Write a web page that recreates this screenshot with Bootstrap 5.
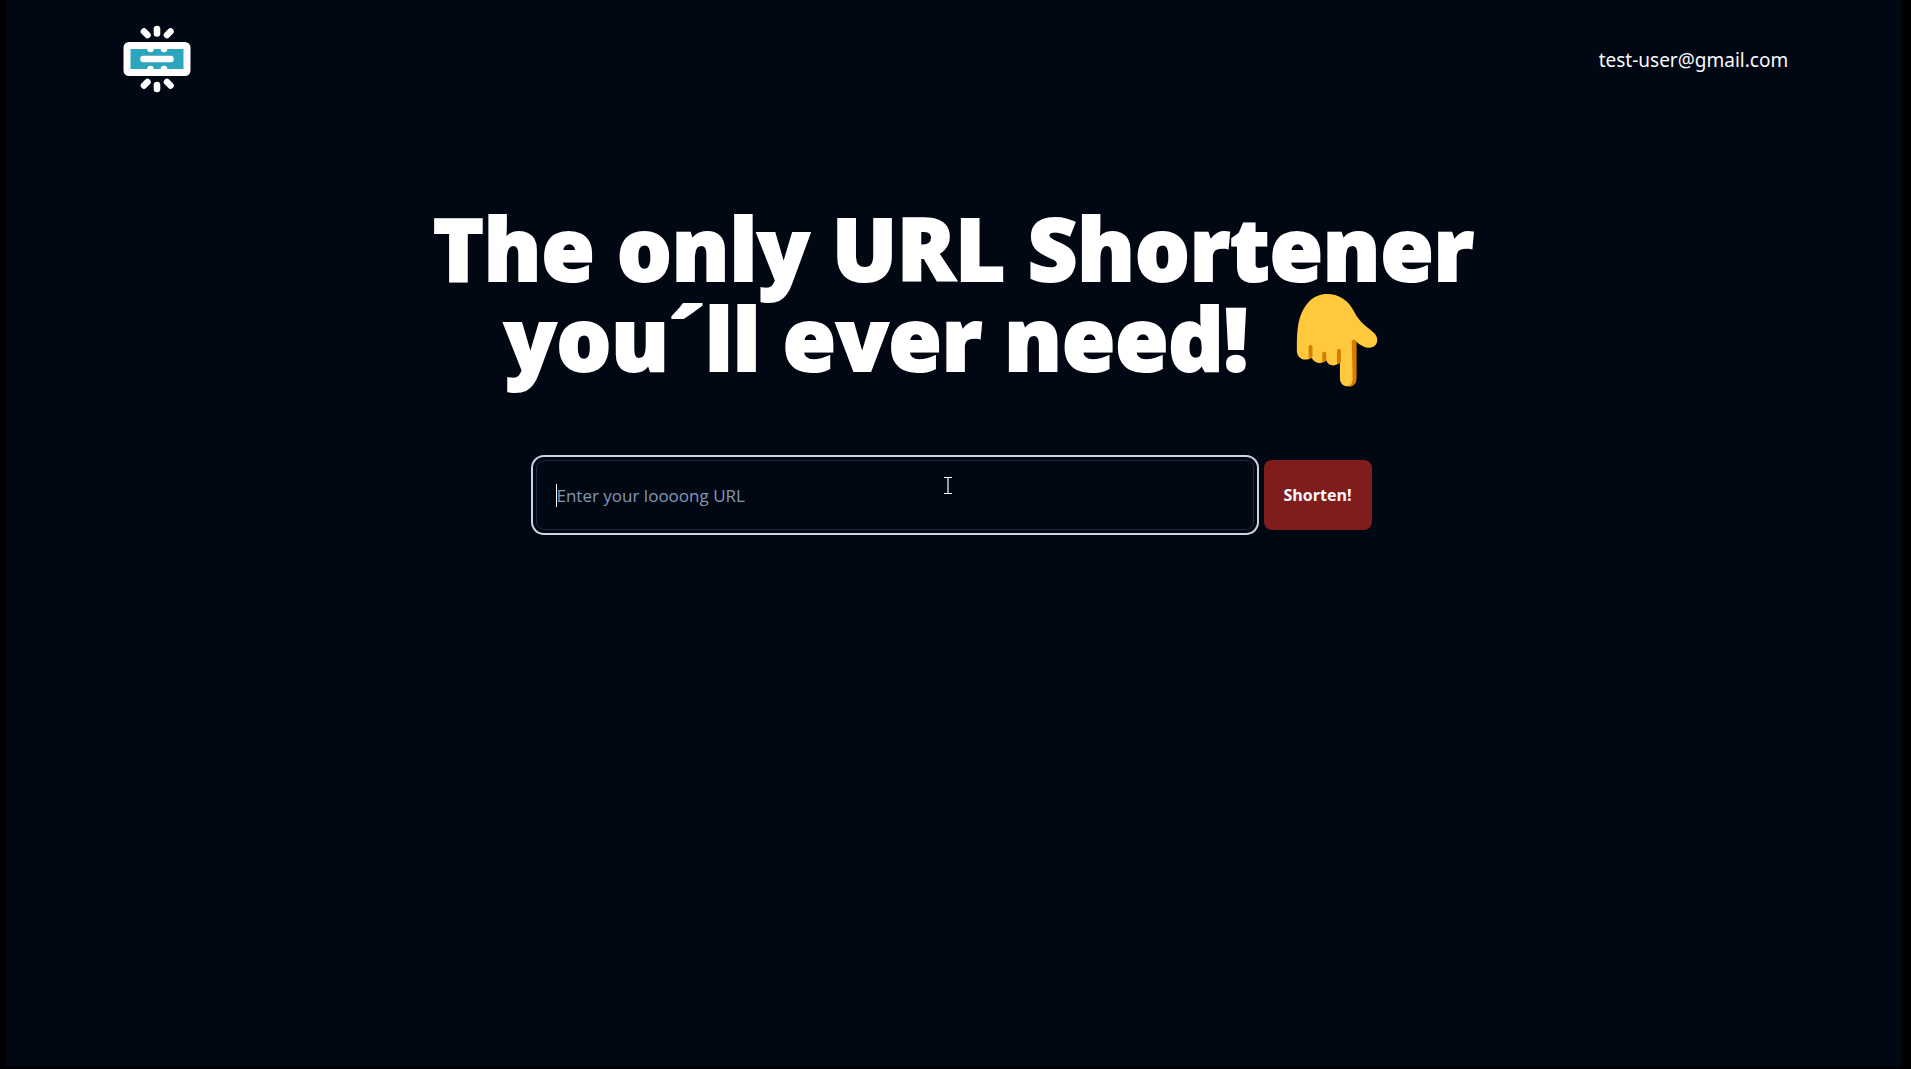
<!DOCTYPE html>
<html lang="en">
<head>
<meta charset="utf-8">
<meta name="viewport" content="width=device-width, initial-scale=1">
<title>URL Shortener</title>
<link href="https://cdn.jsdelivr.net/npm/bootstrap@5.3.0/dist/css/bootstrap.min.css" rel="stylesheet">
<style>
  body { background: #000; padding: 0 9px 2px 5px; font-family: "Open Sans", "Noto Sans", sans-serif; }
  .page-shell { background: #020714; color: #f8fafc; min-height: calc(100vh - 2px); }
  .site-bar { padding: 24px 6% 0; height: 120px; }
  .brand-mark { width: 76px; height: 72px; }
  .user-mail { font-size: 19px; font-family: "Noto Sans", sans-serif; color: #f8fafc; margin-top: 22px; }
  .hero-title { font-size: 86px; line-height: 90px; font-weight: 800; color: #fff; -webkit-text-stroke: 2px #fff; margin-top: 83px; }
  .hand-icon { width: 84px; height: 94px; vertical-align: -10px; margin: 0 24px -6px 24px; }
  .url-form { width: 836px; max-width: 100%; margin-top: 77px; gap: 10px; }
  .url-input, .url-input:focus { height: 70px; background: #020714; color: #f8fafc; border: 1px solid #1e293b; border-radius: 8px; box-shadow: 0 0 0 3px #020714, 0 0 0 5px #cbd5e1; padding: 0 20px; font-size: 17px; caret-color: transparent; }
  .url-input::placeholder { color: #8298b5; opacity: 1; }
  .text-caret { left: 20px; top: 24px; width: 1px; height: 23px; background: #fff; }
  .ibeam { left: 408px; top: 17px; width: 8px; height: 17px; }
  .shorten-btn, .shorten-btn:hover { width: 108px; height: 70px; background: #7f1d1d; color: #f8fafc; border: 0; border-radius: 8px; font-size: 16px; font-weight: 700; padding: 0; }
</style>
<script src="https://cdn.jsdelivr.net/npm/bootstrap@5.3.0/dist/js/bootstrap.bundle.min.js"></script>
</head>
<body>
<div class="page-shell">
  <header class="site-bar d-flex justify-content-between align-items-start">
    <a href="#" aria-label="Home">
      <svg class="brand-mark d-block" viewBox="0 0 76 72" fill="none" stroke="#fff" stroke-linecap="round">
        <rect x="8" y="21.5" width="60" height="27" rx="2" fill="#2ba6bd" stroke-width="7"/>
        <g stroke-width="6.6">
          <path d="M24.500 35H51.500"/>
          <path d="M38 5V9.500M25 7.500L28.500 11M51.500 7.500L48 11M38 61V65M28.500 58L25 61.500M48 58L51.500 61.500"/>
          <path d="M31.500 22.500V25M45 22.500V25M31.500 45V47.500M45 45V47.500"/>
        </g>
      </svg>
    </a>
    <a href="#" class="user-mail text-decoration-none">test-user@gmail.com</a>
  </header>
  <main class="d-flex flex-column align-items-center">
    <h1 class="hero-title text-center mb-0">The only URL Shortener<br>you´ll ever need!
      <svg class="hand-icon" viewBox="0 0 84 96" role="img" aria-label="Hand pointing down">
        <path fill="#ffc83d" d="M1 56C1 38 2 24 10 13C17 3 25 1 32 1C43 1 54 7 60 20C65 30 72 34 79 40C85 45 84 52 79 55C73 58 66 54 60 48V87C60 98 45 98 45 87V70C41 76 33 75 31 69C26 73 19 72 16 66C8 71 1 66 1 59Z"/>
        <path fill="#d67d00" d="M57 50Q57 47 60 48L62 50V87Q62 95 54 96Q58 93 58 87ZM13 55Q13 53 15 53Q17 53 17 55V65L13 68ZM27 61Q27 60 29 60Q31 60 31 62V69L27 71ZM42 59Q42 57 44 57Q46 57 46 59V71L42 73Z"/>
      </svg>
    </h1>
    <form class="url-form d-flex" onsubmit="return false">
      <div class="position-relative flex-grow-1">
        <input type="url" id="long-url" class="url-input form-control" placeholder="Enter your loooong URL" aria-label="Long URL">
        <span class="text-caret position-absolute"></span>
        <svg class="ibeam position-absolute" viewBox="0 0 8 17" aria-hidden="true"><path fill="#fff" d="M0 0H8V1H0ZM0 16H8V17H0Z"/><path fill="#94989f" d="M3 1H5V16H3Z"/></svg>
      </div>
      <button type="submit" class="shorten-btn btn">Shorten!</button>
    </form>
  </main>
</div>
</body>
</html>
